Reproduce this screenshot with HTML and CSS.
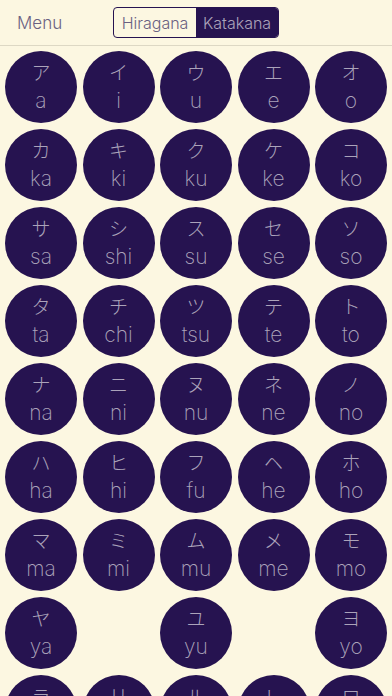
FILE: index.html
```html
<!DOCTYPE html>
<html lang="ja">
<head>
<meta charset="UTF-8">
<meta name="viewport" content="width=device-width, initial-scale=1.0">
<title>Kana</title>
<link rel="stylesheet" href="styles.css">
</head>
<body>
<nav class="topbar">
    <span class="menu">Menu</span>
    <div class="segmented">
        <span class="seg">Hiragana</span>
        <span class="seg active">Katakana</span>
    </div>
</nav>

<div class="grid" id="grid"></div>

<script>
const kana = [
    ['ア','a'],['イ','i'],['ウ','u'],['エ','e'],['オ','o'],
    ['カ','ka'],['キ','ki'],['ク','ku'],['ケ','ke'],['コ','ko'],
    ['サ','sa'],['シ','shi'],['ス','su'],['セ','se'],['ソ','so'],
    ['タ','ta'],['チ','chi'],['ツ','tsu'],['テ','te'],['ト','to'],
    ['ナ','na'],['ニ','ni'],['ヌ','nu'],['ネ','ne'],['ノ','no'],
    ['ハ','ha'],['ヒ','hi'],['フ','fu'],['ヘ','he'],['ホ','ho'],
    ['マ','ma'],['ミ','mi'],['ム','mu'],['メ','me'],['モ','mo'],
    ['ヤ','ya'],null,['ユ','yu'],null,['ヨ','yo'],
    ['ラ','ra'],['リ','ri'],['ル','ru'],['レ','re'],['ロ','ro']
];

const grid = document.getElementById('grid');
kana.forEach(k => {
    const cell = document.createElement('div');
    if (k) {
        cell.className = 'kana';
        cell.innerHTML = '<span class="char">' + k[0] + '</span><span class="roma">' + k[1] + '</span>';
    } else {
        cell.className = 'kana empty';
    }
    grid.appendChild(cell);
});
</script>
</body>
</html>
```

FILE: styles.css
```css
:root {
    --bg: #fcf7e1;
    --ink: #261350;
    --soft: #aba3ba;
    --muted: #6a6182;
}

html, body {
    margin: 0;
    height: 100%;
    overflow: hidden;
}

body {
    background-color: var(--bg);
    font-family: Inter, Roboto, "Noto Sans CJK JP", sans-serif;
    font-weight: 300;
}

.topbar {
    height: 46px;
    border-bottom: 1px solid #ddd8c4;
    display: flex;
    align-items: center;
    padding: 0 0 0 17px;
    box-sizing: border-box;
}

.menu {
    color: var(--muted);
    font-size: 17px;
    width: 96px;
    margin-top: 1px;
}

.segmented {
    display: flex;
    border: 1px solid var(--ink);
    border-radius: 4px;
    overflow: hidden;
    height: 31px;
    box-sizing: border-box;
}

.seg {
    width: 82px;
    display: flex;
    align-items: center;
    justify-content: center;
    font-size: 16px;
    color: var(--muted);
}

.seg.active {
    background-color: var(--ink);
    color: var(--soft);
}

.grid {
    display: grid;
    grid-template-columns: repeat(5, 72px);
    column-gap: 5.5px;
    row-gap: 6px;
    padding: 5px 5px 0 5px;
}

.kana {
    width: 72px;
    height: 72px;
    border-radius: 50%;
    background-color: var(--ink);
    display: flex;
    flex-direction: column;
    align-items: center;
    padding-top: 9px;
    box-sizing: border-box;
    color: var(--soft);
}

.kana.empty {
    background: none;
}

.char {
    font-family: "Noto Sans CJK JP", sans-serif;
    font-weight: 300;
    font-size: 19px;
    line-height: 24px;
}

.roma {
    font-size: 21px;
    font-weight: 200;
    line-height: 24px;
    margin-top: 5px;
}
```
